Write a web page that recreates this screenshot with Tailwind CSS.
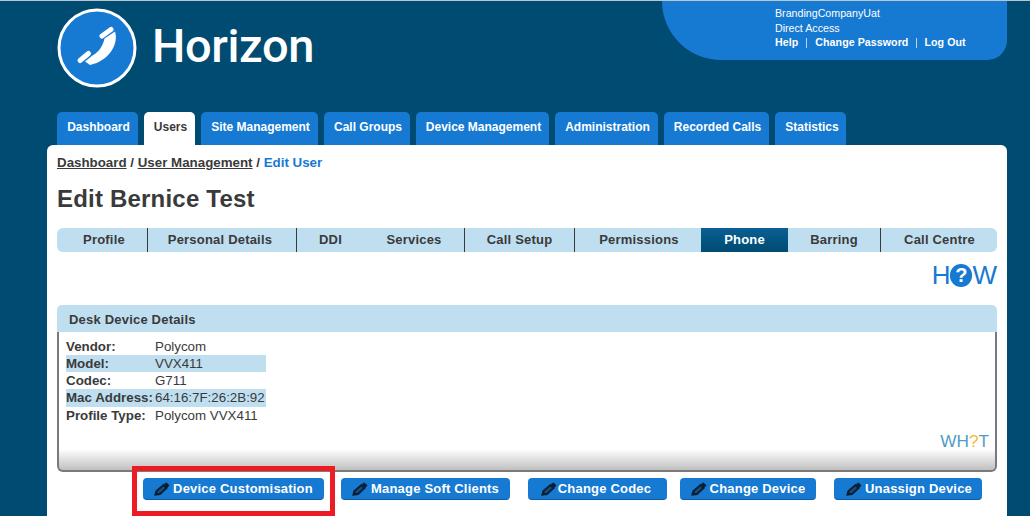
<!DOCTYPE html>
<html lang="en">
<head>
  <meta charset="UTF-8">
  <title>Horizon - Edit User</title>
  <script src="https://cdn.jsdelivr.net/npm/@tailwindcss/browser@4"></script>
</head>
<body class="relative h-[516px] w-[1030px] overflow-hidden bg-[#004b71] font-['Liberation_Sans',Arial,sans-serif] text-[#3a3a3a]">

  <!-- header -->
  <div class="relative h-[112px] border-t border-[#b9c6d0]">
    <div class="flex items-center pl-[57px] pt-[7px]">
      <svg class="h-[80px] w-[80px]" viewBox="0 0 80 80">
        <circle cx="40" cy="40" r="38" fill="#1679d2" stroke="#fff" stroke-width="3"/>
        <path d="M47.500 30.500L58 23.500C62 36 52 53 33 57L28 53.500L35.500 47.500C41 45 46 38 47.500 30.500z" fill="#fff"/>
        <path d="M45 28L54 21.500M23 52.500L31.500 45.500" stroke="#fff" stroke-width="5" stroke-linecap="round"/>
      </svg>
      <span class="mb-[6px] ml-[15px] font-['Roboto',sans-serif] text-[47px] leading-none font-medium tracking-[-0.4px] text-white">Horizon</span>
    </div>
    <div class="absolute top-0 left-[662px] h-[59px] w-[345px] rounded-br-[20px] rounded-bl-[60px] bg-[#1679d2] pt-[5px] pl-[113px] text-[10.670px] leading-[15px] text-white">
      <div>BrandingCompanyUat</div>
      <div>Direct Access</div>
      <div class="flex items-center leading-[13px] font-bold tracking-[0.05px]">
        <span>Help</span>
        <span class="mx-[8px] h-[10px] border-l border-white/70"></span>
        <span>Change Password</span>
        <span class="mx-[7.500px] h-[10px] border-l border-white/70"></span>
        <span>Log Out</span>
      </div>
    </div>
  </div>

  <!-- main nav -->
  <nav class="flex h-[33px] gap-[6px] pl-[57px] text-[12px] font-bold text-white">
    <a class="flex w-[81px] justify-center rounded-t-[5px] bg-[#1679d2] pt-[6px] pl-[2px]">Dashboard</a>
    <a class="flex w-[51px] justify-center rounded-t-[5px] bg-white pt-[6px] pl-[2px] text-[#3a3a3a]">Users</a>
    <a class="flex w-[117px] justify-center rounded-t-[5px] bg-[#1679d2] pt-[6px] pl-[2px]">Site Management</a>
    <a class="flex w-[86px] justify-center rounded-t-[5px] bg-[#1679d2] pt-[6px] pl-[2px]">Call Groups</a>
    <a class="flex w-[133px] justify-center rounded-t-[5px] bg-[#1679d2] pt-[6px] pl-[2px]">Device Management</a>
    <a class="flex w-[103px] justify-center rounded-t-[5px] bg-[#1679d2] pt-[6px] pl-[2px]">Administration</a>
    <a class="flex w-[105px] justify-center rounded-t-[5px] bg-[#1679d2] pt-[6px] pl-[2px]">Recorded Calls</a>
    <a class="flex w-[71px] justify-center rounded-t-[5px] bg-[#1679d2] pt-[6px] pl-[3px]">Statistics</a>
  </nav>

  <!-- content panel -->
  <main class="ml-[47px] h-[371px] w-[960px] rounded-t-[6px] bg-white px-[10px]">
    <div class="pt-[10px] text-[13.330px] leading-[16px] font-bold">
      <a class="underline">Dashboard</a> / <a class="underline">User Management</a> / <span class="text-[#1679d2]">Edit User</span>
    </div>
    <h1 class="mt-[14px] text-[24px] leading-[28px] font-bold tracking-[0.2px]">Edit Bernice Test</h1>

    <div class="mt-[15px] flex h-[24px] w-[940px] rounded-[6px] bg-[#bfdff1] text-[13px] leading-[23px] font-bold tracking-[0.2px]">
      <a class="w-[91px] border-r border-[#3a3a3a] pl-[4px] text-center">Profile</a>
      <a class="w-[149px] border-r border-[#3a3a3a] pr-[4px] text-center">Personal Details</a>
      <a class="w-[67px] text-center">DDI</a>
      <a class="w-[101px] border-r border-[#3a3a3a] text-center">Services</a>
      <a class="w-[110px] border-r border-[#3a3a3a] text-center">Call Setup</a>
      <a class="w-[126px] pl-[2px] text-center">Permissions</a>
      <a class="w-[87px] bg-gradient-to-b from-[#0a5f94] to-[#004b71] text-center text-white">Phone</a>
      <a class="w-[93px] border-r border-[#3a3a3a] text-center">Barring</a>
      <a class="flex-1 pl-[1px] text-center">Call Centre</a>
    </div>

    <div class="mt-[9px] flex w-[940px] items-center justify-end text-[26px] leading-[28px] text-[#1679d2]">
      <span>H</span>
      <span class="flex h-[23px] w-[22px] items-center justify-center rounded-full bg-[#1679d2] text-[20px] font-bold text-white">?</span>
      <span>W</span>
    </div>

    <section class="mt-[16px] w-[940px]">
      <div class="h-[27px] rounded-t-[5px] bg-[#bfdff1] pl-[12px] text-[13px] leading-[29px] font-bold tracking-[0.2px]">Desk Device Details</div>
      <div class="relative h-[140px] rounded-b-[6px] border-x-2 border-b-2 border-[#7a7a7a] bg-gradient-to-b from-white from-[85%] to-[#c0c0c0] pt-[5.700px] pl-[7px]">
        <dl class="w-[200px] text-[13.330px] leading-[17.250px]">
          <div class="flex"><dt class="w-[89px] font-bold">Vendor:</dt><dd>Polycom</dd></div>
          <div class="flex bg-[#bfdff1]"><dt class="w-[89px] font-bold">Model:</dt><dd>VVX411</dd></div>
          <div class="flex"><dt class="w-[89px] font-bold">Codec:</dt><dd>G711</dd></div>
          <div class="flex bg-[#bfdff1]"><dt class="w-[89px] font-bold whitespace-nowrap">Mac Address:</dt><dd>64:16:7F:26:2B:92</dd></div>
          <div class="flex"><dt class="w-[89px] font-bold">Profile Type:</dt><dd>Polycom VVX411</dd></div>
        </dl>
        <div class="absolute right-[6px] bottom-[19px] text-[17.200px] leading-[20px] text-[#4f9cc6]">WH<span class="text-[#f5b82e]">?</span>T</div>
      </div>
    </section>

    <div class="mt-[6px] flex text-[13px] font-bold tracking-[0.2px] text-white">
      <a class="ml-[86px] flex h-[22px] w-[181px] items-center justify-center gap-[3px] rounded-[4px] border-b border-[#0e5c9e] bg-[#1679d2] pt-[1px]">
        <svg class="h-[14px] w-[16px]" viewBox="0 0 16 14"><path d="M1.500 12.500l1-3.500 7-6 3 3-6.500 6z" fill="#0f4f86" stroke="#0b1e30" stroke-width="2"/><path d="M10 2l2.500-1.500 3 3L13 6z" fill="#0b1e30"/><path d="M1 13l1-4 3 3z" fill="#0b1e30"/></svg>
        Device Customisation
      </a>
      <a class="ml-[17px] flex h-[22px] w-[169px] items-center justify-center gap-[3px] rounded-[4px] border-b border-[#0e5c9e] bg-[#1679d2] pt-[1px]">
        <svg class="h-[14px] w-[16px]" viewBox="0 0 16 14"><path d="M1.500 12.500l1-3.500 7-6 3 3-6.500 6z" fill="#0f4f86" stroke="#0b1e30" stroke-width="2"/><path d="M10 2l2.500-1.500 3 3L13 6z" fill="#0b1e30"/><path d="M1 13l1-4 3 3z" fill="#0b1e30"/></svg>
        Manage Soft Clients
      </a>
      <a class="ml-[18px] flex h-[22px] w-[139px] items-center justify-center gap-[1px] rounded-[4px] border-b border-[#0e5c9e] bg-[#1679d2] pt-[1px] pr-[3px]">
        <svg class="h-[14px] w-[16px]" viewBox="0 0 16 14"><path d="M1.500 12.500l1-3.500 7-6 3 3-6.500 6z" fill="#0f4f86" stroke="#0b1e30" stroke-width="2"/><path d="M10 2l2.500-1.500 3 3L13 6z" fill="#0b1e30"/><path d="M1 13l1-4 3 3z" fill="#0b1e30"/></svg>
        Change Codec
      </a>
      <a class="ml-[13px] flex h-[22px] w-[136px] items-center justify-center gap-[3px] rounded-[4px] border-b border-[#0e5c9e] bg-[#1679d2] pt-[1px]">
        <svg class="h-[14px] w-[16px]" viewBox="0 0 16 14"><path d="M1.500 12.500l1-3.500 7-6 3 3-6.500 6z" fill="#0f4f86" stroke="#0b1e30" stroke-width="2"/><path d="M10 2l2.500-1.500 3 3L13 6z" fill="#0b1e30"/><path d="M1 13l1-4 3 3z" fill="#0b1e30"/></svg>
        Change Device
      </a>
      <a class="ml-[18px] flex h-[22px] w-[148px] items-center justify-center gap-[3px] rounded-[4px] border-b border-[#0e5c9e] bg-[#1679d2] pt-[1px] pl-[2px]">
        <svg class="h-[14px] w-[16px]" viewBox="0 0 16 14"><path d="M1.500 12.500l1-3.500 7-6 3 3-6.500 6z" fill="#0f4f86" stroke="#0b1e30" stroke-width="2"/><path d="M10 2l2.500-1.500 3 3L13 6z" fill="#0b1e30"/><path d="M1 13l1-4 3 3z" fill="#0b1e30"/></svg>
        Unassign Device
      </a>
    </div>
  </main>

  <!-- red annotation round the first button -->
  <div class="absolute top-[466px] left-[132px] h-[50px] w-[203px] border-[5px] border-[#ed1c24]"></div>

</body>
</html>
